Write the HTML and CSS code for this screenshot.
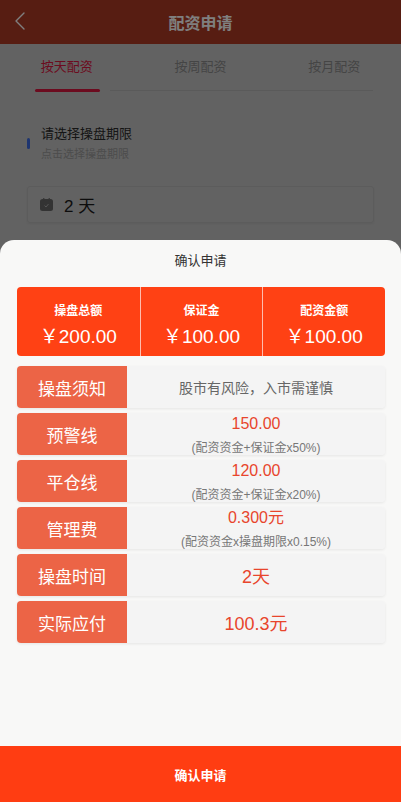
FILE: index.html
```html
<!DOCTYPE html>
<html lang="zh-CN">
<head>
  <meta charset="UTF-8" />
  <meta name="viewport" content="width=device-width, initial-scale=1.0"/>
  <title>配资申请</title>
  <link rel="stylesheet" href="styles.css">
</head>
<body>
  <header class="topbar">
    <svg class="back" width="12" height="20" viewBox="0 0 12 20">
      <polyline points="10,2 2,10 10,18" fill="none" stroke="#fff" stroke-width="1.4" stroke-linecap="round" stroke-linejoin="round"/>
    </svg>
    <h1>配资申请</h1>
  </header>

  <nav class="tabs">
    <div class="tab active">按天配资</div>
    <div class="tab">按周配资</div>
    <div class="tab">按月配资</div>
  </nav>
  <div class="tabs-line"></div>

  <section class="period">
    <div class="period-head">
      <span class="bar"></span>
      <div>
        <div class="period-title">请选择操盘期限</div>
        <div class="period-sub">点击选择操盘期限</div>
      </div>
    </div>
    <div class="picker">
      <svg width="13" height="13" viewBox="0 0 13 13">
        <rect x="0" y="1" width="13" height="12" rx="2.5" fill="#666"/>
        <rect x="3" y="0" width="1.5" height="3" rx="0.7" fill="#666"/>
        <rect x="8.5" y="0" width="1.5" height="3" rx="0.7" fill="#666"/>
        <polyline points="4.5,7.5 6,9 8.5,6" fill="none" stroke="#aaa" stroke-width="1"/>
      </svg>
      <span>2 天</span>
    </div>
  </section>

  <div class="mask">
    <div class="sheet">
      <div class="sheet-title">确认申请</div>

      <div class="summary">
        <div class="sum-col">
          <div class="sum-label">操盘总额</div>
          <div class="sum-value">￥200.00</div>
        </div>
        <div class="sum-col">
          <div class="sum-label">保证金</div>
          <div class="sum-value">￥100.00</div>
        </div>
        <div class="sum-col">
          <div class="sum-label">配资金额</div>
          <div class="sum-value">￥100.00</div>
        </div>
      </div>

      <div class="rows">
        <div class="row">
          <div class="row-label">操盘须知</div>
          <div class="row-body"><span class="notice">股市有风险，入市需谨慎</span></div>
        </div>
        <div class="row">
          <div class="row-label">预警线</div>
          <div class="row-body two">
            <div class="val">150.00</div>
            <div class="formula">(配资资金+保证金x50%)</div>
          </div>
        </div>
        <div class="row">
          <div class="row-label">平仓线</div>
          <div class="row-body two">
            <div class="val">120.00</div>
            <div class="formula">(配资资金+保证金x20%)</div>
          </div>
        </div>
        <div class="row">
          <div class="row-label">管理费</div>
          <div class="row-body two">
            <div class="val">0.300元</div>
            <div class="formula">(配资资金x操盘期限x0.15%)</div>
          </div>
        </div>
        <div class="row">
          <div class="row-label">操盘时间</div>
          <div class="row-body"><span class="big">2天</span></div>
        </div>
        <div class="row">
          <div class="row-label">实际应付</div>
          <div class="row-body"><span class="big">100.3元</span></div>
        </div>
      </div>

      <button class="confirm">确认申请</button>
    </div>
  </div>
</body>
</html>
```

FILE: styles.css
```css
* {
  box-sizing: border-box;
  margin: 0;
  padding: 0;
}

body {
  font-family: "Liberation Sans", "Noto Sans CJK SC", sans-serif;
  background: #c4c4c4;
  height: 802px;
  overflow: hidden;
}

/* page under the mask */
.topbar {
  height: 44px;
  background: #ae3a24;
  display: flex;
  align-items: center;
  justify-content: center;
  position: relative;
}

.back {
  position: absolute;
  left: 14px;
  top: 11px;
}

.topbar h1 {
  font-size: 16px;
  font-weight: bold;
  color: #fff;
}

.tabs {
  display: grid;
  grid-template-columns: repeat(3, 1fr);
  height: 46px;
}

.tab {
  position: relative;
  text-align: center;
  font-size: 13px;
  line-height: 46px;
  color: #8a8a8a;
}

.tab.active {
  color: #d8163e;
}

.tab.active::after {
  content: "";
  position: absolute;
  left: 35px;
  bottom: -2px;
  width: 65px;
  height: 3px;
  border-radius: 2px;
  background: #d8163e;
}

.tabs-line {
  height: 1px;
  margin: 0 28px 0 110px;
  background: #b4b4b4;
}

.period {
  padding: 32px 27px 0;
}

.period-head {
  display: flex;
  align-items: center;
  gap: 11px;
}

.bar {
  width: 3px;
  height: 11px;
  border-radius: 2px;
  background: #3c6ae0;
}

.period-title {
  font-size: 13px;
  line-height: 21px;
  color: #2a2a2a;
}

.period-sub {
  font-size: 11px;
  line-height: 20px;
  color: #999;
}

.picker {
  margin-top: 22px;
  height: 37px;
  border: 1px solid #b8b8b8;
  border-radius: 3px;
  box-shadow: 0 1px 2px rgba(0, 0, 0, 0.05);
  display: flex;
  align-items: center;
  gap: 11px;
  padding-left: 12px;
  font-size: 17px;
  color: #1a1a1a;
}

/* dimmed backdrop holding the bottom sheet */
.mask {
  position: fixed;
  top: 0;
  left: 0;
  width: 100%;
  height: 100%;
  z-index: 10;
  background-color: rgba(0, 0, 0, 0.5);
  display: flex;
  flex-direction: column;
  justify-content: flex-end;
}

.sheet {
  height: 562px;
  background: #f8f8f7;
  border-radius: 14px 14px 0 0;
  display: flex;
  flex-direction: column;
}

.sheet-title {
  text-align: center;
  font-size: 13px;
  line-height: 18px;
  color: #333;
  padding: 12px 0 17px;
}

.summary {
  margin: 0 16px 0 17px;
  height: 69px;
  background: #ff4114;
  border-radius: 4px;
  display: grid;
  grid-template-columns: repeat(3, 1fr);
  color: #fff;
  text-align: center;
}

.sum-col {
  padding-top: 16px;
}

.sum-col + .sum-col {
  border-left: 1px solid rgba(255, 255, 255, 0.65);
}

.sum-label {
  font-size: 12px;
  font-weight: bold;
  line-height: 16px;
}

.sum-value {
  margin-top: 6px;
  font-size: 19px;
  line-height: 24px;
}

.rows {
  margin: 10px 16px 0 17px;
  display: flex;
  flex-direction: column;
  gap: 5px;
}

.row {
  display: flex;
  height: 42px;
  border-radius: 4px;
  overflow: hidden;
  box-shadow: 0 1px 3px rgba(0, 0, 0, 0.08);
}

.row-label {
  width: 110px;
  background: #ec6446;
  color: #fff;
  font-size: 17px;
  display: flex;
  align-items: center;
  justify-content: center;
}

.row-body {
  flex: 1;
  background: #f4f4f4;
  display: flex;
  align-items: center;
  justify-content: center;
}

.row-body.two {
  flex-direction: column;
  justify-content: flex-start;
  padding-top: 1px;
}

.notice {
  font-size: 14px;
  color: #666;
}

.val {
  font-size: 16px;
  line-height: 20px;
  color: #e8452c;
}

.formula {
  margin-top: 7px;
  font-size: 12px;
  line-height: 14px;
  color: #777;
}

.big {
  font-size: 18px;
  color: #e8452c;
}

.confirm {
  margin-top: auto;
  height: 56px;
  border: none;
  background: #ff3d12;
  color: #fff;
  font-family: inherit;
  font-size: 13px;
  font-weight: bold;
}
```
